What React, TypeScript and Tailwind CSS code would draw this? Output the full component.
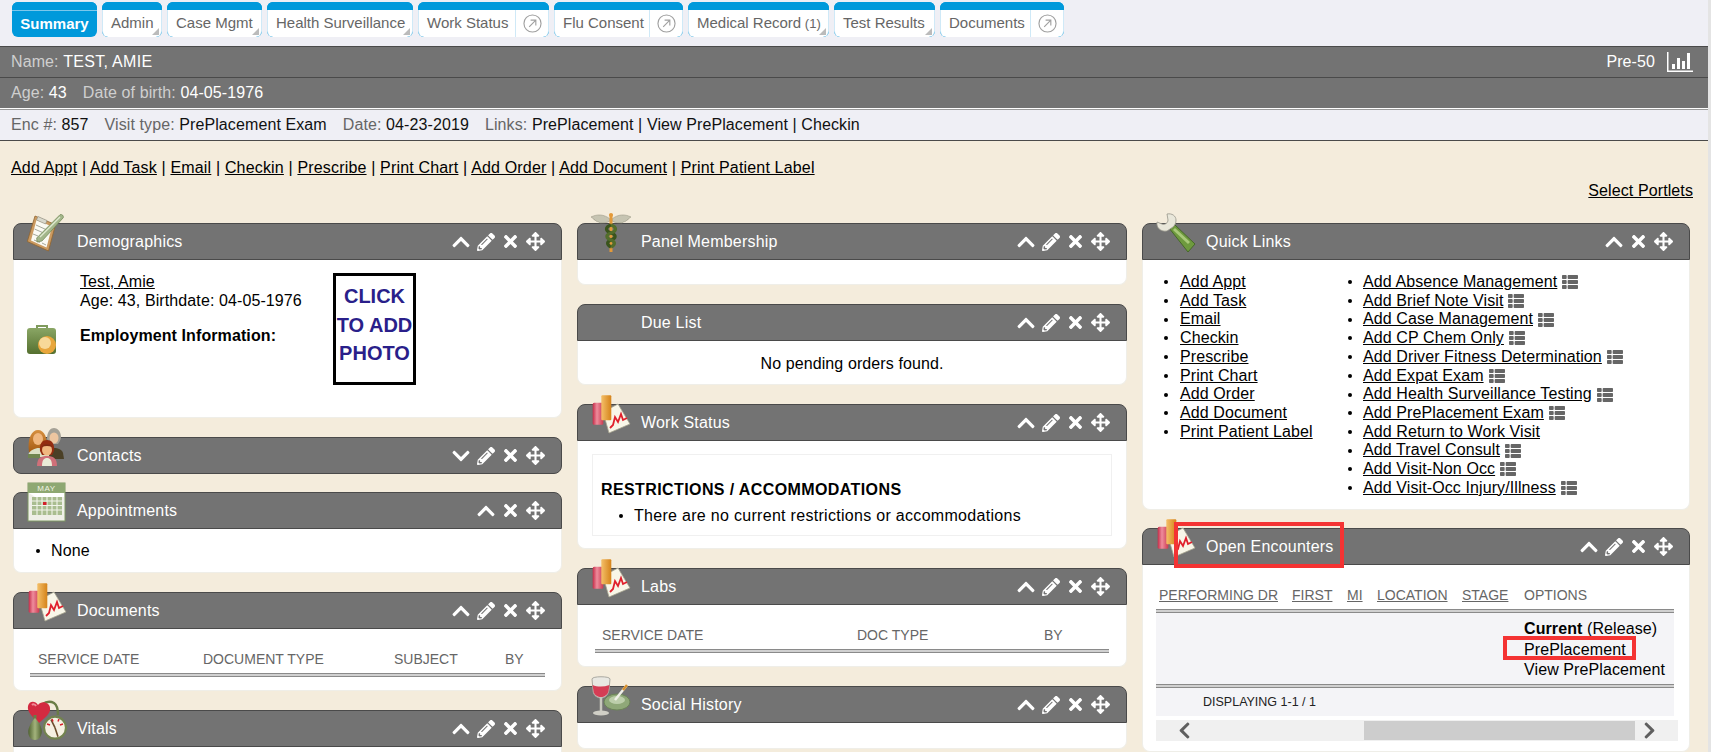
import type { ReactNode } from "react";
import { FaArrowsAlt, FaChevronDown, FaChevronUp, FaPencilAlt, FaThList, FaTimes } from "react-icons/fa";

const ClipboardIcon = () => (
    <svg viewBox="0 0 40 40" className="w-full h-full">
        <path d="M8 3 28.500 11.700 21.500 38 .3 28.500z" fill="#cb9a60" stroke="#8f6431" strokeWidth=".8" strokeLinejoin="round" />
        <path d="M9.500 7 25 13.500 19.500 34.500 4 27.500z" fill="#fbfaf3" />
        <path d="M11 3.500l9 4-1.500 3.500-9-4z" fill="#d9d8cc" stroke="#8c8b7f" strokeWidth=".6" />
        <path d="M9 12l11 5M7.500 16l8 3.500M6 21l5 2M7 27l6 2.500M15 30l4 2" stroke="#a5a89b" strokeWidth="1" />
        <path d="M9.700 25 33 1.700c2-.8 3.800 1 3.300 3L15 28l-5 1z" fill="#a3b68a" stroke="#6d8452" strokeWidth=".7" />
        <path d="M13 24 33 4" stroke="#dfe8d0" strokeWidth="1.200" />
    </svg>
);

const ContactsIcon = () => (
    <svg viewBox="0 0 40 40" className="w-full h-full">
        <defs>
            <linearGradient id="hairBrown" x1="0" y1="0" x2="0" y2="1">
                <stop offset="0" stopColor="#d68f3f" />
                <stop offset="1" stopColor="#a65c14" />
            </linearGradient>
        </defs>
        <path d="M20 12c0-8 4-11 7-11s7 3 7 9c0 3-2 5-3 7h-8z" fill="#a5a196" />
        <ellipse cx="27" cy="11" rx="4.500" ry="5.500" fill="#eec6a0" />
        <path d="M17 28c1-9 17-9 19-2l1 6H18z" fill="#4b4026" />
        <path d="M2 25C0 11 5 3 11 3s11 8 8 22z" fill="url(#hairBrown)" />
        <ellipse cx="11" cy="12" rx="5" ry="6" fill="#f0b77f" />
        <path d="M1 28c2-5 7-7 11-7s9 2 10 7v2H1z" fill="#dbe0c6" />
        <path d="M1 27h12v4H1z" fill="#6f8550" />
        <path d="M13 24c-1-8 3-11 7-11s8 3 7 11l-2 4H15z" fill="#942c10" />
        <ellipse cx="20" cy="23" rx="5" ry="5.500" fill="#f0b77f" />
        <path d="M15 20c1-4 9-4 10 0-3-1.500-7-1.500-10 0z" fill="#7f2a12" />
        <path d="M10 39c0-8 4-10 10-10s10 2 10 10z" fill="#cf7079" />
        <path d="M15 39c0-6 2-8 5-8s5 2 5 8z" fill="#e9ecd7" />
    </svg>
);

const CalendarIcon = () => (
    <svg viewBox="0 0 40 40" className="w-full h-full">
        <rect x="1" y="1" width="37" height="38" fill="#efefe8" stroke="#7f9864" />
        <rect x="1" y="1" width="37" height="10" fill="#8ea872" />
        <text x="19.500" y="9" textAnchor="middle" fontSize="8" fontFamily="Liberation Sans" fill="#eef3e2" letterSpacing=".6">MAY</text>
        <path d="M2 11h35v4H8z" fill="#fff" />
        <rect x="5" y="15" width="30" height="18" fill="#a9bd90" />
        <path d="M10 15v18M15 15v18M20 15v18M25 15v18M30 15v18M5 19h30M5 23.500h30M5 28h30" stroke="#f1f4ea" strokeWidth="1.100" />
        <rect x="16" y="20" width="3.500" height="3" fill="#d3202a" />
    </svg>
);

const ChartIcon = () => (
    <svg viewBox="0 0 40 40" className="w-full h-full">
        <defs>
            <linearGradient id="chartRed" x1="0" y1="0" x2="1" y2="0">
                <stop offset="0" stopColor="#c42c48" />
                <stop offset=".4" stopColor="#ee8c9c" />
                <stop offset="1" stopColor="#cc3a50" />
            </linearGradient>
            <linearGradient id="chartOrange" x1="0" y1="0" x2="1" y2="0">
                <stop offset="0" stopColor="#f4bf68" />
                <stop offset="1" stopColor="#d5831a" />
            </linearGradient>
        </defs>
        <path d="M12 18 27 10 39 30 18 39z" fill="#f8f6e8" stroke="#a6a38e" strokeWidth=".8" />
        <path d="M19 34l3-3 2-8 3 5 3-8 2 6 4-2" fill="none" stroke="#e0202c" strokeWidth="1.800" />
        <rect x="1.700" y="8.700" width="10.600" height="22" rx="1.500" fill="url(#chartRed)" />
        <rect x="10.300" y="1.300" width="10" height="25" rx="1" fill="url(#chartOrange)" />
    </svg>
);

const VitalsIcon = () => (
    <svg viewBox="0 0 40 40" className="w-full h-full">
        <defs>
            <linearGradient id="bulb" x1="0" y1="0" x2="1" y2="0">
                <stop offset="0" stopColor="#4f6230" />
                <stop offset=".5" stopColor="#a3b37c" />
                <stop offset="1" stopColor="#4f6230" />
            </linearGradient>
        </defs>
        <path d="M8 17C8 6 20-1 27 3c3 2 4 7 4 12" fill="none" stroke="#6a7d46" strokeWidth="2.400" />
        <path d="M12 23C4 16 0 11 1 6s7-6 10-1c3-5 12-3 12 3 1 6-6 10-11 15z" fill="#d32a40" />
        <path d="M5 5c1-1 3-1 4 1" stroke="#f08a96" strokeWidth="2" fill="none" />
        <path d="M8 15v4" stroke="#6a7d46" strokeWidth="3" />
        <path d="M8 18c5 5 7 10 6.700 14-.3 5-3 8-6.700 8s-6.700-3-6.700-8c0-4 2-9 6.700-14z" fill="url(#bulb)" />
        <circle cx="28" cy="27.700" r="11" fill="#f5f0e2" stroke="#72834f" strokeWidth="2.200" />
        <path d="M28 27.700l-4-8M28 27.700l3 9" stroke="#6b4d2d" strokeWidth="1.600" />
        <path d="M20 24l3 1M36 24l-3 1M25 19l1 2.500M32 19l-1 2.500" stroke="#d8202a" strokeWidth="1.500" />
    </svg>
);

const CaduceusIcon = () => (
    <svg viewBox="0 0 40 40" className="w-full h-full">
        <path d="M19 6C13 1 6 1 0 4c3 1 2 3 4 3 1 2 3 1 5 3 3 0 7 0 10-2zM21 6c6-5 13-5 19-2-3 1-2 3-4 3-1 2-3 1-5 3-3 0-7 0-10-2z" fill="#c6c4b2" stroke="#8f8d7b" strokeWidth=".5" />
        <rect x="18.500" y="1" width="3" height="38" fill="#e39a3a" />
        <circle cx="20" cy="2" r="2" fill="#e39a3a" />
        <path d="M20 12c-6 2-6 6 0 8 6 2 5 5 0 7-5 2-4 5 0 7" fill="none" stroke="#3a541c" strokeWidth="3.200" />
        <path d="M20 12c6 2 6 6 0 8-6 2-5 5 0 7 5 2 4 5 0 7" fill="none" stroke="#526d2b" strokeWidth="3.200" />
    </svg>
);

const WrenchIcon = () => (
    <svg viewBox="0 0 40 40" className="w-full h-full">
        <path d="M13 15 19 12 39 31 32 39z" fill="#6e9a3e" stroke="#47682a" />
        <path d="M17 17l2-2 15 14-2 2z" fill="#a9c979" />
        <path d="M11 1c5-1 9 2 9 6 0 3-1 5-3 7l-6 4C5 19 0 15 1 9l5 2c3 1 6-1 6-4z" fill="#e9e7da" stroke="#97968a" strokeWidth=".8" />
    </svg>
);

const SocialIcon = () => (
    <svg viewBox="0 0 40 40" className="w-full h-full">
        <ellipse cx="26" cy="26" rx="13" ry="8" fill="#8fa878" stroke="#6c8458" />
        <ellipse cx="26" cy="24" rx="8" ry="4" fill="#bdceab" />
        <path d="M24 24 36 9" stroke="#f0f0e8" strokeWidth="2.500" />
        <path d="M32 14l4-5" stroke="#d8912e" strokeWidth="2.500" />
        <path d="M1 3c0-3 18-3 18 0l-1 11c-1 6-5 8-8 8s-8-2-8-8z" fill="#e9e8e2" stroke="#a9a8a0" />
        <path d="M1.500 9c5 2 11 2 17 0l-1 6c-1 4-4 6-7.500 6S3 19 2.500 15z" fill="#d53d55" />
        <path d="M10 22v13" stroke="#c9c8be" strokeWidth="2.500" />
        <ellipse cx="10" cy="37" rx="8" ry="2.500" fill="#d0cfc6" />
    </svg>
);

const BriefcaseIcon = () => (
    <svg viewBox="0 0 30 30" className="w-full h-full">
        <defs>
            <linearGradient id="caseGreen" x1="0" y1="0" x2="0" y2="1">
                <stop offset="0" stopColor="#8aa665" />
                <stop offset="1" stopColor="#55702f" />
            </linearGradient>
        </defs>
        <path d="M10 4V1h10v3" fill="none" stroke="#7f9a5d" strokeWidth="2" />
        <rect x="0" y="3" width="29" height="26" rx="3" fill="url(#caseGreen)" />
        <circle cx="20" cy="20" r="9" fill="#e8a63c" />
        <circle cx="18" cy="18" r="6" fill="#f8d998" />
    </svg>
);

const ExternalIcon = () => (
    <svg viewBox="0 0 20 20" className="w-[19px] h-[19px]" fill="none" stroke="#a0a0a0" strokeWidth="1.200">
        <circle cx="10" cy="10" r="9" />
        <path d="M6.500 13.500l7-7M8 6.500h5.500V12" />
    </svg>
);

type TabProps = { label: string; width: string; extra?: string; corner?: boolean; external?: boolean; active?: boolean };

const Tab = ({ label, width, extra, corner, external, active }: TabProps) => (
    <div className={`${width} h-[35px] shrink-0 rounded-[6px] overflow-hidden flex flex-col bg-[#0099db] tracking-normal`}>
        <div className="h-[8px] shrink-0 bg-[#0099db]" />
        {active ? (
            <div className="flex-1 border-t border-[#7cc8ec] flex items-center justify-center text-white font-bold text-[15px]">{label}</div>
        ) : (
            <div className="relative flex-1 bg-white border-x border-[#cfe9f7] flex items-center text-[#666] text-[15px] rounded-b-[6px]">
                <span className="flex-1 pl-[8px] whitespace-nowrap">
                    {label}
                    {extra && <span className="text-[13px]"> {extra}</span>}
                </span>
                {external && (
                    <span className="w-[33px] h-full border-l border-[#cfe9f7] flex items-center justify-center shrink-0">
                        <ExternalIcon />
                    </span>
                )}
                {corner && <span className="absolute right-[2px] bottom-[2px] border-l-[7px] border-b-[7px] border-l-transparent border-b-[#bbbbbb]" />}
            </div>
        )}
    </div>
);

type PanelProps = {
    title: string;
    icon?: ReactNode;
    edit?: boolean;
    collapsed?: boolean;
    bodyHeight?: string;
    className?: string;
    children?: ReactNode;
};

const Panel = ({ title, icon, edit = true, collapsed, bodyHeight, className = "", children }: PanelProps) => (
    <section className={`relative ${className}`}>
        <div className={`h-[37px] bg-[#737373] border border-[#4a4a4a] flex items-center justify-between text-white ${collapsed ? "rounded-lg" : "rounded-t-lg"}`}>
            <h2 className="pl-[63px] text-[16px] tracking-[0.2px]">{title}</h2>
            <div className="flex items-center pr-[13px]">
                <span className="w-[25px] flex justify-center">{collapsed ? <FaChevronDown size={20} /> : <FaChevronUp size={20} />}</span>
                {edit && <span className="w-[25px] flex justify-center"><FaPencilAlt size={18} /></span>}
                <span className="w-[25px] flex justify-center"><FaTimes size={19} /></span>
                <span className="w-[25px] flex justify-center"><FaArrowsAlt size={19} /></span>
            </div>
        </div>
        {icon && <div className="absolute left-[14px] top-[-10px] w-10 h-10">{icon}</div>}
        {!collapsed && (
            <div className={`${bodyHeight ?? ""} bg-white rounded-b-lg border border-t-0 border-[#efeee8]`}>{children}</div>
        )}
    </section>
);

const DoubleRule = () => <div className="h-[4px] border-y border-[#8a8a8a] bg-[#d0d0d0]" />;

const topLinks = ["Add Appt", "Add Task", "Email", "Checkin", "Prescribe", "Print Chart", "Add Order", "Add Document", "Print Patient Label"];
const quickLeft = ["Add Appt", "Add Task", "Email", "Checkin", "Prescribe", "Print Chart", "Add Order", "Add Document", "Print Patient Label"];
const quickRight = [
    { label: "Add Absence Management", list: true },
    { label: "Add Brief Note Visit", list: true },
    { label: "Add Case Management", list: true },
    { label: "Add CP Chem Only", list: true },
    { label: "Add Driver Fitness Determination", list: true },
    { label: "Add Expat Exam", list: true },
    { label: "Add Health Surveillance Testing", list: true },
    { label: "Add PrePlacement Exam", list: true },
    { label: "Add Return to Work Visit", list: false },
    { label: "Add Travel Consult", list: true },
    { label: "Add Visit-Non Occ", list: true },
    { label: "Add Visit-Occ Injury/Illness", list: true },
];

const Bullet = () => <span className="w-[4px] h-[4px] rounded-full bg-black shrink-0" />;

const App = () => {
    return (
        <div className="w-[1711px] h-[752px] overflow-hidden flex bg-[#e4e4e4] text-black text-[16px] tracking-[0.1px] font-['Liberation_Sans',Arial,sans-serif]">
            <div className="w-[1708px] shrink-0 bg-[#f4ecdc]">
                {/* tabs */}
                <div className="h-[46px] bg-[#efeff5] flex gap-[5px] pl-[12px] pt-[2px]">
                    <Tab label="Summary" width="w-[85px]" active />
                    <Tab label="Admin" width="w-[60px]" corner />
                    <Tab label="Case Mgmt" width="w-[95px]" corner />
                    <Tab label="Health Surveillance" width="w-[146px]" corner />
                    <Tab label="Work Status" width="w-[131px]" external />
                    <Tab label="Flu Consent" width="w-[129px]" external />
                    <Tab label="Medical Record" extra="(1)" width="w-[141px]" corner />
                    <Tab label="Test Results" width="w-[101px]" corner />
                    <Tab label="Documents" width="w-[124px]" external />
                </div>

                {/* patient bars */}
                <div className="h-[32px] bg-[#737373] border-y border-[#4a4a4a] flex items-center justify-between pl-[11px] pr-[15px]">
                    <div className="text-[#cfcfcf]">Name: <span className="text-white tracking-[0.3px]">TEST, AMIE</span></div>
                    <div className="flex items-center gap-[12px] text-white">
                        <span>Pre-50</span>
                        <svg viewBox="0 0 26 20" className="w-[26px] h-[20px]" fill="#fff">
                            <path d="M0 0h1.500v18.500H26V20H0z" />
                            <rect x="5" y="12" width="3" height="5" />
                            <rect x="10" y="6" width="3" height="11" />
                            <rect x="15" y="9" width="3" height="8" />
                            <rect x="20" y="1" width="3" height="16" />
                        </svg>
                    </div>
                </div>
                <div className="h-[30px] bg-[#737373] flex items-center gap-[16px] pl-[11px] text-[#cfcfcf]">
                    <span>Age: <span className="text-white">43</span></span>
                    <span>Date of birth: <span className="text-white">04-05-1976</span></span>
                </div>
                <div className="h-[1px] bg-white" />
                <div className="h-[1px] bg-[#9a9a9a]" />
                <div className="h-[31px] bg-[#efeff5] border-b border-[#4a4a4a] flex items-center gap-[16px] pl-[11px] text-[#666]">
                    <span>Enc #: <span className="text-[#111]">857</span></span>
                    <span>Visit type: <span className="text-[#111]">PrePlacement Exam</span></span>
                    <span>Date: <span className="text-[#111]">04-23-2019</span></span>
                    <span>Links: <span className="text-[#111]">PrePlacement | View PrePlacement | Checkin</span></span>
                </div>

                {/* action links */}
                <div className="pl-[11px] pt-[18px] h-[41px] leading-[18px] tracking-[0.17px]">
                    {topLinks.map((link, i) => (
                        <span key={link}>
                            {i > 0 && " | "}
                            <span className="underline">{link}</span>
                        </span>
                    ))}
                </div>
                <div className="h-[41px] text-right pr-[15px] leading-[18px] underline">Select Portlets</div>

                {/* portlet columns */}
                <div className="grid grid-cols-[549px_550px_548px] gap-[15px] pl-[13px]">
                    <div className="flex flex-col gap-[19px]">
                        <Panel title="Demographics" icon={<ClipboardIcon />} bodyHeight="h-[158px]">
                            <div className="flex pt-[13px]">
                                <div className="w-[66px] shrink-0 pl-[13px] pt-[52px]">
                                    <div className="w-[30px] h-[30px]"><BriefcaseIcon /></div>
                                </div>
                                <div className="w-[253px] shrink-0 leading-[18.6px]">
                                    <div className="underline">Test, Amie</div>
                                    <div>Age: 43, Birthdate: 04-05-1976</div>
                                    <div className="font-bold mt-[17px]">Employment Information:</div>
                                </div>
                                <div className="w-[83px] h-[112px] border-[3px] border-black text-center font-bold text-[20px] leading-[28.5px] text-[#2a1f8a] pt-[6px] whitespace-nowrap overflow-hidden tracking-normal flex flex-col items-center">
                                    <span>CLICK</span>
                                    <span>TO ADD</span>
                                    <span>PHOTO</span>
                                </div>
                            </div>
                        </Panel>
                        <Panel title="Contacts" icon={<ContactsIcon />} collapsed className="mb-[-1px]" />
                        <Panel title="Appointments" icon={<CalendarIcon />} edit={false} bodyHeight="h-[44px]">
                            <div className="flex items-center gap-[11px] pl-[22px] pt-[13px] leading-[18px]">
                                <Bullet />
                                <span>None</span>
                            </div>
                        </Panel>
                        <Panel title="Documents" icon={<ChartIcon />} bodyHeight="h-[62px]">
                            <div className="px-[16px] pt-[21px]">
                                <div className="grid grid-cols-[165px_191px_111px_1fr] pl-[8px] text-[14px] text-[#666] leading-[18px] h-[23px] tracking-normal">
                                    <span>SERVICE DATE</span>
                                    <span>DOCUMENT TYPE</span>
                                    <span>SUBJECT</span>
                                    <span>BY</span>
                                </div>
                                <DoubleRule />
                            </div>
                        </Panel>
                        <Panel title="Vitals" icon={<VitalsIcon />} bodyHeight="h-[30px]" />
                    </div>

                    <div className="flex flex-col gap-[19px]">
                        <Panel title="Panel Membership" icon={<CaduceusIcon />} bodyHeight="h-[25px]" />
                        <Panel title="Due List" bodyHeight="h-[44px]">
                            <div className="text-center pt-[14px] leading-[18px]">No pending orders found.</div>
                        </Panel>
                        <Panel title="Work Status" icon={<ChartIcon />} bodyHeight="h-[108px]">
                            <div className="pt-[13px] px-[14px]">
                                <div className="h-[82px] border border-[#f0f0f0] pl-[8px] pt-[26px] leading-[18px]">
                                    <div className="font-bold tracking-[0.4px]">RESTRICTIONS / ACCOMMODATIONS</div>
                                    <div className="flex items-center gap-[11px] pl-[18px] mt-[8px] tracking-[0.3px]">
                                        <Bullet />
                                        <span>There are no current restrictions or accommodations</span>
                                    </div>
                                </div>
                            </div>
                        </Panel>
                        <Panel title="Labs" icon={<ChartIcon />} bodyHeight="h-[62px]">
                            <div className="px-[17px] pt-[21px]">
                                <div className="grid grid-cols-[255px_187px_1fr] pl-[7px] text-[14px] text-[#666] leading-[18px] h-[23px] tracking-normal">
                                    <span>SERVICE DATE</span>
                                    <span>DOC TYPE</span>
                                    <span>BY</span>
                                </div>
                                <DoubleRule />
                            </div>
                        </Panel>
                        <Panel title="Social History" icon={<SocialIcon />} bodyHeight="h-[26px]" />
                    </div>

                    <div className="flex flex-col gap-[18px]">
                        <Panel title="Quick Links" icon={<WrenchIcon />} edit={false} bodyHeight="h-[250px]">
                            <div className="flex pt-[13px] leading-[18.7px]">
                                <ul className="w-[205px] shrink-0 pl-[21px]">
                                    {quickLeft.map((link) => (
                                        <li key={link} className="flex items-center gap-[12px]">
                                            <Bullet />
                                            <span className="underline">{link}</span>
                                        </li>
                                    ))}
                                </ul>
                                <ul>
                                    {quickRight.map((item) => (
                                        <li key={item.label} className="flex items-center">
                                            <Bullet />
                                            <span className="underline ml-[11px]">{item.label}</span>
                                            {item.list && <FaThList size={16} className="text-[#666] ml-[5px]" />}
                                        </li>
                                    ))}
                                </ul>
                            </div>
                        </Panel>
                        <Panel title="Open Encounters" icon={<ChartIcon />} bodyHeight="h-[187px]">
                            <div className="pl-[13px] pr-[12px] pt-[21px]">
                                <div className="grid grid-cols-[133px_55px_30px_85px_62px_1fr] pl-[3px] text-[14px] text-[#666] leading-[18px] h-[23px] w-[518px] tracking-normal">
                                    <span className="underline">PERFORMING DR</span>
                                    <span className="underline">FIRST</span>
                                    <span className="underline">MI</span>
                                    <span className="underline">LOCATION</span>
                                    <span className="underline">STAGE</span>
                                    <span>OPTIONS</span>
                                </div>
                                <div className="w-[518px]">
                                    <DoubleRule />
                                    <div className="h-[71px] bg-[#f4f4f7] pl-[368px] pt-[6px] leading-[20.5px] whitespace-nowrap">
                                        <div><span className="font-bold">Current</span> (Release)</div>
                                        <div>PrePlacement</div>
                                        <div>View PrePlacement</div>
                                    </div>
                                    <DoubleRule />
                                    <div className="h-[28px] bg-[#f4f4f7] pl-[47px] text-[12.5px] text-[#222] flex items-center tracking-normal">DISPLAYING 1-1 / 1</div>
                                </div>
                                <div className="mt-[4px] w-[522px] h-[21px] bg-[#f0f0f0] flex items-center justify-between px-[19px] relative">
                                    <FaChevronUp size={19} className="-rotate-90 text-[#5f5f5f]" />
                                    <div className="absolute left-[208px] w-[271px] top-[1px] bottom-[1px] bg-[#cdcdcd]" />
                                    <FaChevronUp size={19} className="rotate-90 text-[#5f5f5f] relative" />
                                </div>
                            </div>
                        </Panel>
                        {/* red annotation boxes from the screenshot */}
                        <div className="relative h-0">
                            <div className="absolute left-[32px] top-[-248px] w-[170px] h-[46px] border-[4px] border-[#f43333]" />
                            <div className="absolute left-[361px] top-[-134px] w-[133px] h-[24px] border-[4px] border-[#f43333]" />
                        </div>
                    </div>
                </div>
            </div>
        </div>
    );
};

export default App;
